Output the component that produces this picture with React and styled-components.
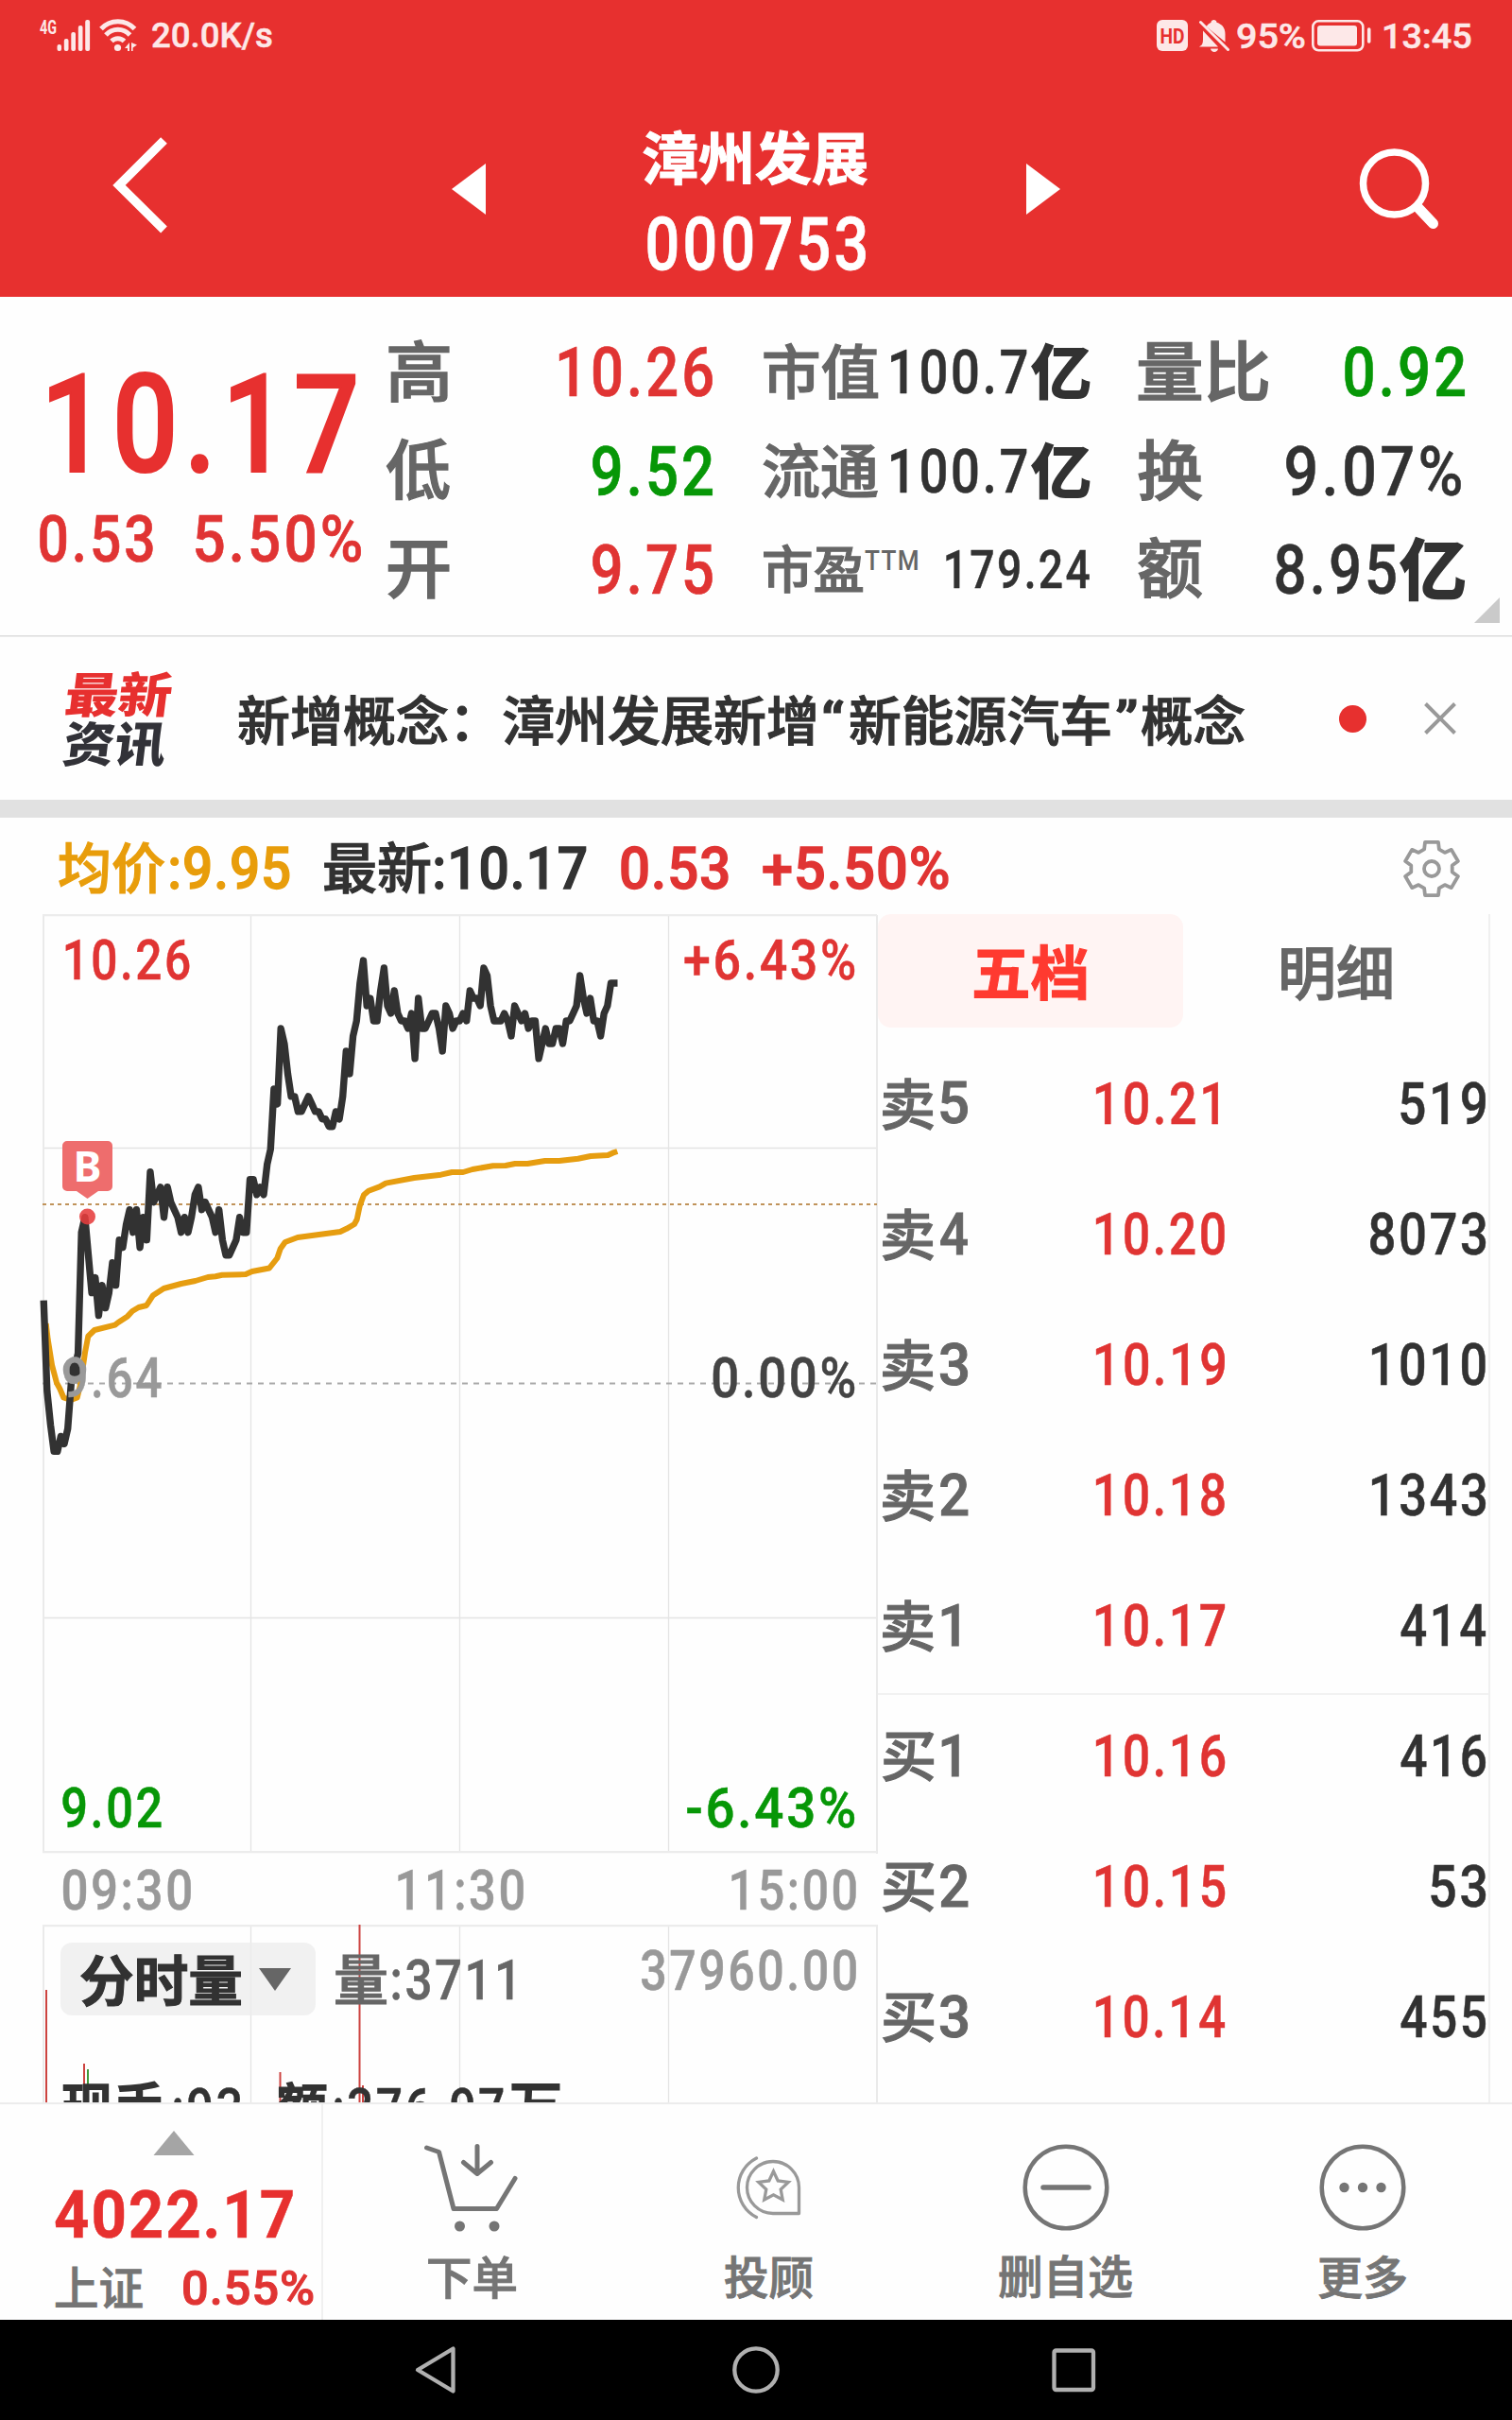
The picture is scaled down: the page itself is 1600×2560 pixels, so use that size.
import React, { useLayoutEffect, useRef, useState } from "react";
import styled, { createGlobalStyle } from "styled-components";

const FONT = '"Roboto", "Noto Sans CJK SC", sans-serif';
const RED = "#e7302f";
const UP = "#e03433";
const DOWN = "#079707";
const INK = "#323232";
const GREY = "#666666";
const LIGHT = "#999999";

const Global = createGlobalStyle`
  *, *::before, *::after { box-sizing: border-box; }
  body { margin: 0; background: #fff; font-family: ${FONT}; }
  svg { display: block; flex: none; }
`;

/* ---------- condensed text ---------- */

const TextBox = styled.span`
  display: block;
  flex: none;
  height: ${(p) => p.$h}px;
  margin-left: ${(p) => p.$ml || 0}px;
  margin-top: ${(p) => p.$mt || 0}px;
  color: ${(p) => p.$color};
`;

const TextRun = styled.span`
  display: block;
  width: max-content;
  white-space: pre;
  font-family: ${FONT};
  font-size: ${(p) => p.$size}px;
  font-weight: ${(p) => p.$weight};
  letter-spacing: ${(p) => p.$ls}px;
  line-height: ${(p) => p.$h}px;
  transform-origin: 0 50%;
  -webkit-text-stroke: ${(p) => p.$stroke}px currentColor;
`;

const OUTLINE = { 500: 0.02, 700: 0.018 };

/* Condenses a run of text so that its ink fills the width w, centred in height h. */
function Fit({ w, h, size, weight = 500, ls = 0, color = INK, ml, mt, skew = 0, stroke, children }) {
  const ref = useRef(null);
  const [fit, setFit] = useState({ width: w || 0, transform: "none" });
  useLayoutEffect(() => {
    const ctx = document.createElement("canvas").getContext("2d");
    ctx.font = `${weight} ${size}px ${FONT}`;
    ctx.letterSpacing = `${ls}px`;
    const m = ctx.measureText(ref.current.textContent);
    const left = m.actualBoundingBoxLeft;
    const ink = left + m.actualBoundingBoxRight;
    const width = w || ink;
    const dy = (m.actualBoundingBoxAscent - m.actualBoundingBoxDescent) / 2 - 0.3418 * size;
    setFit({
      width,
      transform: `translateY(${dy}px) skewX(${-skew}deg) scaleX(${width / ink}) translateX(${left}px)`,
    });
  }, [w, h, size, weight, ls, skew]);
  const outline = stroke === undefined ? size * (OUTLINE[weight] || 0) : stroke;
  return (
    <TextBox $h={h} $ml={ml} $mt={mt} $color={color} style={{ width: fit.width }}>
      <TextRun
        ref={ref}
        $size={size}
        $weight={weight}
        $ls={ls}
        $h={h}
        $stroke={outline}
        style={{ transform: fit.transform }}
      >
        {children}
      </TextRun>
    </TextBox>
  );
}

function Num({ h, size, ls, stroke = 0.5, ...rest }) {
  const fs = size || h / 0.711;
  return <Fit h={h} size={fs} ls={ls === undefined ? fs * 0.05 : ls} stroke={stroke} {...rest} />;
}

/* ---------- shell ---------- */

const Screen = styled.div`
  width: 1600px;
  height: 2560px;
  display: flex;
  flex-direction: column;
  overflow: hidden;
  background: #fefefe;
`;

const Header = styled.header`
  height: 314px;
  flex: none;
  background: ${RED};
`;

const StatusBar = styled.div`
  height: 76px;
  padding: 0 43px 0 40px;
  display: flex;
  justify-content: space-between;
  align-items: center;
`;

const StatusGroup = styled.div`
  display: flex;
  align-items: center;
  gap: ${(p) => p.$gap || 0}px;
`;

const TitleBar = styled.div`
  height: 238px;
  display: flex;
  align-items: flex-start;
  padding: 62px 0 0 118px;
`;

const IconSlot = styled.div`
  width: ${(p) => p.$w}px;
  padding-top: ${(p) => p.$pt}px;
  flex: none;
`;

const TitleText = styled.div`
  width: 405px;
  display: flex;
  flex-direction: column;
  align-items: flex-start;
  padding-top: 1px;
`;

const white90 = "#fde8e8";

function Signal() {
  return (
    <svg width="106" height="52" viewBox="40 10 106 52" fill={white90}>
      <text x="42" y="34" fontFamily="Roboto" fontWeight="700" fontSize="20" textLength="18" lengthAdjust="spacingAndGlyphs">4G</text>
      <rect x="60.500" y="45" width="4.500" height="7" rx="2" />
      <rect x="67.800" y="39" width="4.700" height="13" rx="2" />
      <rect x="75.300" y="32" width="4.700" height="20" rx="2" />
      <rect x="82.800" y="25" width="4.700" height="27" rx="2" />
      <rect x="90.200" y="19" width="4.900" height="33" rx="2" />
      <g fill="none" stroke={white90} strokeWidth="5">
        <path d="M107 28.500a24 24 0 0 1 35.500 0" />
        <path d="M112 35a17 17 0 0 1 25.500 0" />
        <path d="M118 41.500a9.500 9.500 0 0 1 13.500 0" />
      </g>
      <circle cx="124.500" cy="48.500" r="3.600" />
      <path d="M137 43v9h-2v-3h-3zM139 43v9h1.600v-3.600l4.400-2.800z" />
    </svg>
  );
}

function StatusIcons() {
  return (
    <svg width="80" height="36" viewBox="1223 19 80 36" fill={white90}>
      <rect x="1224" y="20" width="33" height="33" rx="6" />
      <text x="1227.500" y="44.500" fill={RED} fontFamily="Roboto" fontWeight="700" fontSize="22" textLength="26" lengthAdjust="spacingAndGlyphs">HD</text>
      <path d="M1269 48.500c3-1.500 4-3.500 4-8v-9L1289 48.500zM1276.500 27a11 11 0 0 1 5-4.200c0-3.800 6-3.800 6 0 6 2 9 6 9 12.500v8.200zM1281 50.500h8c-.5 4.500-7.500 4.500-8 0z" />
      <path d="M1270.500 22.500l29 29" stroke={white90} strokeWidth="3" strokeLinecap="round" />
    </svg>
  );
}

function Battery() {
  return (
    <svg width="66" height="34" viewBox="1387 20 66 34">
      <rect x="1389.300" y="21.300" width="53" height="31" rx="6" fill="none" stroke={white90} strokeWidth="2.600" />
      <rect x="1394" y="26" width="42" height="21.500" rx="3" fill={white90} />
      <path d="M1448.700 30v13" stroke={white90} strokeWidth="3.600" strokeLinecap="round" />
    </svg>
  );
}

/* ---------- quote ---------- */

const Quote = styled.section`
  height: 358px;
  flex: none;
  display: flex;
  position: relative;
  padding-top: 27px;
`;

const PriceColumn = styled.div`
  width: 410px;
  padding: 55px 0 0 53px;
`;

const ChangeRow = styled.div`
  display: flex;
  margin: 46px 0 0 -11px;
`;

const StatColumn = styled.div`
  width: ${(p) => p.$w}px;
  margin-right: ${(p) => p.$mr}px;
  display: flex;
  flex-direction: column;
`;

const StatRow = styled.div`
  height: 104.5px;
  display: flex;
  align-items: center;
  justify-content: space-between;
  padding-right: ${(p) => p.$pr || 0}px;
`;

const Pair = styled.div`
  display: flex;
  align-items: ${(p) => p.$align || "center"};
`;

const Corner = styled.svg`
  position: absolute;
  right: 13px;
  bottom: 13px;
`;

const Rule = styled.div`
  height: 2px;
  flex: none;
  background: linear-gradient(#dddddd 50%, #ececec 50%);
`;

/* ---------- news ---------- */

const News = styled.section`
  height: 172px;
  flex: none;
  display: flex;
  align-items: center;
  padding-left: 66px;
`;

const NewsBadge = styled.div`
  width: 186px;
  display: flex;
  flex-direction: column;
  gap: 5px;
`;

const Headline = styled.div`
  display: flex;
  align-items: flex-start;
  width: 1066px;
  padding-top: 4px;
`;

const Dot = styled.span`
  width: 29px;
  height: 29px;
  border-radius: 50%;
  background: ${RED};
  margin: 0 61px 0 99px;
`;

const Band = styled.div`
  height: 19px;
  flex: none;
  background: #e1e1e1;
`;

const Summary = styled.section`
  height: 102px;
  flex: none;
  display: flex;
  align-items: center;
  padding: 4px 54px 0 62px;
`;

const Spacer = styled.span`
  flex: 1;
`;

/* ---------- chart ---------- */

const Board = styled.section`
  height: 1257px;
  flex: none;
  display: flex;
  overflow: hidden;
`;

const ChartColumn = styled.div`
  width: 929px;
  padding-left: 40px;
`;

const Stack = styled.div`
  width: 890px;
  height: ${(p) => p.$h}px;
  display: grid;
  & > * { grid-area: 1 / 1; }
`;

const Labels = styled.div`
  display: flex;
  flex-direction: column;
  padding: ${(p) => p.$pad};
`;

const LabelRow = styled.div`
  display: flex;
  flex: none;
  justify-content: space-between;
  align-items: flex-start;
  margin-top: ${(p) => p.$mt || 0}px;
`;

const Axis = styled.div`
  height: 76px;
  display: flex;
  align-items: center;
  padding: 1px 0 0 27px;
`;

const Pill = styled.div`
  width: 270px;
  height: 77px;
  border-radius: 12px;
  background: rgba(236, 236, 236, 0.72);
  display: flex;
  align-items: center;
  padding-left: 21px;
  gap: 18px;
`;

const TICKS = [
  11, -1, -5.5, -9, -9, -7, -8, -6, 0, 2, 4, 20, 22, 17, 12, 14, 9, 13, 10, 12, 16, 13, 19, 18, 21, 23, 20, 23, 18, 22,
  19, 28, 24, 25, 26, 22, 26, 24, 23, 22, 20, 22, 20, 22, 25, 26, 23, 24, 23, 22, 20, 23, 19, 17, 17, 18, 19, 22, 20,
  20, 27, 27, 25, 26, 25, 29, 31, 39, 37, 47, 45, 41, 38, 38, 36, 36, 37, 38, 37, 36, 36, 35, 35, 34, 34, 36, 35, 38,
  44, 41, 46, 48, 53, 56, 50, 51, 48, 48, 52, 55, 50, 49, 52, 49, 48, 48, 47, 49, 43, 51, 47, 47, 48, 49, 49, 47, 44,
  50, 49, 47, 48, 48, 49, 48, 52, 51, 51, 50, 55, 54, 50, 48, 48, 48, 49, 48, 46, 50, 49, 48, 49, 47, 48, 48, 43, 45,
  47, 45, 45, 47, 47, 45, 48, 48, 49, 50, 54, 51, 49, 51, 48, 48, 46, 49, 50, 53, 53,
];

const PRICE_POINTS = TICKS.map((t, i) => `${(46.2 + i * 3.638).toFixed(1)},${(1463.5 - t * 7.99).toFixed(1)}`)
  .concat("653.500,1040")
  .join(" ");

const AVERAGE_POINTS =
  "48.7,1400 50.7,1417 55,1444 60,1463 63.3,1469 67.3,1478.5 75,1481 81.7,1478.5 85,1465 90,1430.7 93.3,1413.5 " +
  "100,1407 121.7,1401.6 125,1399 135,1392.4 140,1387 146.7,1383 155,1381 161.7,1370.6 173.3,1363 191.7,1358 " +
  "206.7,1355 220,1351 228,1350.3 235,1348.8 260,1348 266.7,1345 285,1341.5 293.3,1331 296.7,1321 301.7,1314 " +
  "315,1309 360,1303 366.7,1299.8 375,1295 377.7,1290 380.7,1275.7 385,1264 390,1259.7 401.7,1255.4 408.3,1251.6 " +
  "438.3,1246 466.7,1242.7 478.3,1240 490,1240 500,1237 521.7,1233.3 535,1233 545,1231 558.3,1231 576.7,1228 " +
  "591.7,1228 611.7,1225.7 625,1223 643.3,1222 648.3,1219.7 653.3,1218";

function PriceChart() {
  return (
    <svg width="890" height="994" viewBox="40 967 890 994">
      <g stroke="#e4e4e4" strokeWidth="1.300">
        <path d="M265.500 968V1960M486.500 968V1960M707.500 968V1960M45 1214.500H928M45 1711.500H928" />
      </g>
      <path d="M46 968V1960M928 968V1961" stroke="#eaeaea" strokeWidth="2" />
      <path d="M45 968.200H928M45 1959.200H928" stroke="#ececec" strokeWidth="2.200" />
      <path d="M45 1274H928" stroke="#c0935a" strokeWidth="2" strokeDasharray="4 4" />
      <path d="M45 1463.500H928" stroke="#a9a9a9" strokeWidth="2" strokeDasharray="6 6" />
      <polyline points={AVERAGE_POINTS} fill="none" stroke="#e69d10" strokeWidth="6" strokeLinejoin="round" />
      <polyline points={PRICE_POINTS} fill="none" stroke={INK} strokeWidth="7.400" strokeLinejoin="round" />
      <circle cx="92.500" cy="1287" r="8.500" fill="#e63c3c" fillOpacity=".88" />
      <path d="M71 1207h43a5 5 0 0 1 5 5v43a5 5 0 0 1-5 5h-10l-11.500 8-11.500-8h-10a5 5 0 0 1-5-5v-43a5 5 0 0 1 5-5z" fill="#ee6d6d" />
      <text x="92.500" y="1249.500" textAnchor="middle" fill="#fff" fontFamily="Noto Sans" fontWeight="700" fontSize="45">B</text>
    </svg>
  );
}

function BasePoint() {
  return (
    <svg width="890" height="994" viewBox="40 967 890 994">
      <circle cx="79" cy="1448.500" r="9.800" fill={INK} stroke={LIGHT} strokeWidth="5" />
    </svg>
  );
}

function VolumeChart() {
  return (
    <svg width="890" height="188" viewBox="40 2036 890 188">
      <path d="M265.500 2036V2224M486.500 2036V2224M707.500 2036V2224" stroke="#e4e4e4" strokeWidth="1.300" />
      <path d="M46 2036V2224M928 2036V2224" stroke="#eaeaea" strokeWidth="2" />
      <path d="M45 2037.200H928" stroke="#ececec" strokeWidth="2.200" />
      <path d="M49 2105V2224M89 2183V2224M296.500 2192V2224M380.500 2036V2224M384 2206V2224" stroke="#cc4340" strokeWidth="2" />
      <path d="M93 2189V2224" stroke="#3f9a3a" strokeWidth="2" />
    </svg>
  );
}

/* ---------- order book ---------- */

const Book = styled.div`
  width: 648px;
  border-right: 2px solid #f0f0f0;
`;

const Tabs = styled.div`
  display: flex;
  height: 120px;
`;

const Tab = styled.div`
  width: 323px;
  display: flex;
  align-items: center;
  justify-content: center;
  border-radius: 14px;
  padding: 4px 0 0;
  background: ${(p) => (p.$active ? "#fff4f3" : "transparent")};
`;

const Asks = styled.div`
  padding: 11px 0 3px;
  margin-bottom: -5px;
  border-bottom: 2px solid #f2f2f2;
`;

const Order = styled.div`
  height: 138px;
  display: flex;
  align-items: center;
  padding: 0 3px 0 5px;
`;

const Level = styled.div`
  width: 226px;
  display: flex;
  align-items: center;
`;

const asks = [
  ["卖", "5", "10.21", "519", 90],
  ["卖", "4", "10.20", "8073", 122],
  ["卖", "3", "10.19", "1010", 120],
  ["卖", "2", "10.18", "1343", 120],
  ["卖", "1", "10.17", "414", 90],
];
const bids = [
  ["买", "1", "10.16", "416", 90],
  ["买", "2", "10.15", "53", 58],
  ["买", "3", "10.14", "455", 90],
];

function OrderRow({ row: [side, level, price, qty, qtyWidth] }) {
  return (
    <Order>
      <Level>
        <Fit size={58} h={58} w={54} mt={2} color={GREY}>{side}</Fit>
        <Num h={44} w={level === "1" ? 18 : 29} ml={level === "1" ? 9 : 7} color={GREY} stroke={1}>{level}</Num>
      </Level>
      <Num h={43} w={price.endsWith("1") ? 129 : 136} color={UP}>{price}</Num>
      <Spacer />
      <Num h={43} w={qtyWidth}>{qty}</Num>
    </Order>
  );
}

/* ---------- bottom ---------- */

const Toolbar = styled.nav`
  height: 230px;
  flex: none;
  display: flex;
  padding-right: 1px;
  border-top: 2px solid #ececec;
`;

const IndexBox = styled.div`
  width: 342px;
  border-right: 2px solid #f0f0f0;
  padding: 28px 0 0 58px;
`;

const IndexRow = styled.div`
  display: flex;
  align-items: center;
  margin-top: 30px;
`;

const Tool = styled.div`
  flex: 1;
  display: flex;
  flex-direction: column;
  align-items: center;
  padding-top: 38px;
  gap: 21px;
`;

const NavBar = styled.div`
  height: 106px;
  flex: none;
  background: #000;
  display: flex;
  align-items: center;
  justify-content: center;
`;

const G = "#757575";

function CartIcon() {
  return (
    <svg width="102" height="100" viewBox="449 2264 102 100" fill="none" stroke={G} strokeWidth="5" strokeLinecap="round" strokeLinejoin="round">
      <path d="M452.500 2272l13 4.500L481 2336.500h45.500L546 2304.500" />
      <path d="M506 2270.500V2299M491.500 2287.500L506 2299.500L520.500 2287.500" />
      <circle cx="487.500" cy="2355" r="5.500" fill={G} stroke="none" />
      <circle cx="524" cy="2355" r="5.500" fill={G} stroke="none" />
    </svg>
  );
}

function AdvisorIcon() {
  return (
    <svg width="100" height="100" viewBox="763 2264 100 100" fill="none" stroke="#999" strokeWidth="3.300">
      <path d="M818 2286.500a27.500 27.500 0 1 0 0 55h27.500v-27.500a27.500 27.500 0 0 0-27.500-27.500z" strokeLinejoin="round" />
      <path d="M800.500 2283a35 35 0 0 0 0 62.500" strokeLinecap="round" />
      <path d="M818.500 2297l4.700 10 11 1.400-8 7.600 2 11-9.700-5.200-9.700 5.200 2-11-8-7.600 11-1.400z" />
    </svg>
  );
}

function CircleIcon({ children }) {
  return (
    <svg width="100" height="100" viewBox="-50 -50 100 100" fill="none" stroke={G} strokeWidth="4.500">
      <circle r="43.300" />
      {children}
    </svg>
  );
}

function gearPath() {
  const pts = [];
  for (let i = 0; i < 6; i++) {
    [[-21, 22], [-14, 29], [14, 29], [21, 22]].forEach(([a, r]) => {
      const rad = ((i * 60 - 90 + a) * Math.PI) / 180;
      pts.push(`${(r * Math.cos(rad)).toFixed(2)} ${(r * Math.sin(rad)).toFixed(2)}`);
    });
  }
  return `M${pts.join("L")}Z`;
}

const TOOLS = [
  { label: "下单", w: 93, icon: <CartIcon /> },
  { label: "投顾", w: 93, icon: <AdvisorIcon /> },
  { label: "删自选", w: 141, icon: <CircleIcon><path d="M-24 0H24" strokeWidth="5.500" strokeLinecap="round" /></CircleIcon> },
  {
    label: "更多",
    w: 92,
    icon: (
      <CircleIcon>
        <g fill={G} stroke="none"><circle cx="-19.500" r="5.200" /><circle r="5.200" /><circle cx="19.500" r="5.200" /></g>
      </CircleIcon>
    ),
  },
];

export default function App() {
  return (
    <Screen>
      <Global />
      <Header>
        <StatusBar>
          <StatusGroup $gap={15}>
            <Signal />
            <Num h={26} w={127} ls={0} mt={1} color={white90}>20.0K/s</Num>
          </StatusGroup>
          <StatusGroup $gap={6}>
            <StatusIcons />
            <Num h={26} w={72} ls={0} color={white90}>95%</Num>
            <Battery />
            <Num h={26} w={92} ls={0} ml={6} color={white90}>13:45</Num>
          </StatusGroup>
        </StatusBar>
        <TitleBar>
          <IconSlot $w={360} $pt={5}>
            <svg width="62" height="106" viewBox="118 144 62 106">
              <path d="M173.500 149.500L126 197L173.500 244" fill="none" stroke="#fff" strokeWidth="9.500" />
            </svg>
          </IconSlot>
          <IconSlot $w={203} $pt={35}>
            <svg width="36" height="54" viewBox="0 0 36 54"><path d="M0 27L36 0V54z" fill="#fff" /></svg>
          </IconSlot>
          <TitleText>
            <Fit size={60} h={58} w={237} weight={700} color="#fff">漳州发展</Fit>
            <Num h={55} w={231} color="#fff" ml={4} mt={33} stroke={0.8}>000753</Num>
          </TitleText>
          <IconSlot $w={350} $pt={35}>
            <svg width="36" height="54" viewBox="0 0 36 54"><path d="M36 27L0 0V54z" fill="#fff" /></svg>
          </IconSlot>
          <IconSlot $w={90} $pt={14}>
            <svg width="90" height="94" viewBox="1436 152 90 94" fill="none" stroke="#fff">
              <circle cx="1475.500" cy="194" r="33" strokeWidth="7.500" />
              <path d="M1500 219L1516.500 236.500" strokeWidth="11" strokeLinecap="round" />
            </svg>
          </IconSlot>
        </TitleBar>
      </Header>

      <Quote>
        <PriceColumn>
          <Num h={103} w={323} color={RED} stroke={2}>10.17</Num>
          <ChangeRow>
            <Num h={49} w={120} color={UP} stroke={0.7}>0.53</Num>
            <Num h={49} w={175} color={UP} ml={45} stroke={0.7}>5.50%</Num>
          </ChangeRow>
        </PriceColumn>
        <StatColumn $w={344} $mr={54}>
          <StatRow><Fit size={69} h={70} w={64} ml={1} color={GREY}>高</Fit><Num h={52} w={162} color={UP} stroke={0.7}>10.26</Num></StatRow>
          <StatRow><Fit size={69} h={70} w={67} ml={-1} color={GREY}>低</Fit><Num h={52} w={127} color={DOWN} stroke={0.7}>9.52</Num></StatRow>
          <StatRow><Fit size={69} h={70} w={64} ml={1} mt={3} color={GREY}>开</Fit><Num h={52} w={127} color={UP} stroke={0.7}>9.75</Num></StatRow>
        </StatColumn>
        <StatColumn $w={345} $mr={52}>
          {["市值", "流通"].map((label) => (
            <StatRow key={label}>
              <Fit size={62} h={62} w={121} color={GREY}>{label}</Fit>
              <Pair>
                <Num h={46} w={144}>100.7</Num>
                <Fit size={62} h={62} w={61} ml={5} weight={700} stroke={1.8}>亿</Fit>
              </Pair>
            </StatRow>
          ))}
          <StatRow>
            <Pair $align="flex-start">
              <Fit size={54} h={54} w={105} color={GREY}>市盈</Fit>
              <Num h={21} w={56} ml={2} mt={8} stroke={0} color={GREY}>TTM</Num>
            </Pair>
            <Num h={40} w={152}>179.24</Num>
          </StatRow>
        </StatColumn>
        <StatColumn $w={345} $mr={0}>
          <StatRow><Fit size={69} h={70} w={137} color={GREY}>量比</Fit><Num h={52} w={127} color={DOWN} stroke={0.7}>0.92</Num></StatRow>
          <StatRow $pr={4}><Fit size={69} h={70} w={67} color={GREY}>换</Fit><Num h={52} w={185}>9.07%</Num></StatRow>
          <StatRow>
            <Fit size={69} h={70} w={67} color={GREY}>额</Fit>
            <Pair>
              <Num h={52} w={127}>8.95</Num>
              <Fit size={70} h={70} w={68} ml={5} weight={700} stroke={2}>亿</Fit>
            </Pair>
          </StatRow>
        </StatColumn>
        <Corner width="27" height="27" viewBox="0 0 27 27"><path d="M27 0V27H0z" fill="#cacaca" /></Corner>
      </Quote>
      <Rule />

      <News>
        <NewsBadge>
          <Fit size={51} h={49} w={110} weight={900} color={RED} skew={7} ml={5}>最新</Fit>
          <Fit size={51} h={49} w={108} weight={900} color="#323238" skew={7} ml={2}>资讯</Fit>
        </NewsBadge>
        <Headline>
          <Fit size={56} h={56} w={611}>新增概念：漳州发展新增</Fit>
          <Fit size={56} h={20} w={22} ml={8} mt={3}>“</Fit>
          <Fit size={56} h={56} w={276} ml={6}>新能源汽车</Fit>
          <Fit size={56} h={20} w={21} ml={6} mt={3}>”</Fit>
          <Fit size={56} h={56} w={109} ml={6}>概念</Fit>
        </Headline>
        <Dot />
        <svg width="34" height="34" viewBox="0 0 34 34">
          <path d="M1.500 1.500L32.500 32.500M32.500 1.500L1.500 32.500" stroke="#999" strokeWidth="4" />
        </svg>
      </News>
      <Band />

      <Summary>
        <Fit size={58} h={58} w={112} color="#e89d0b">均价</Fit>
        <Num h={43} w={126} ml={6} ls={1} stroke={1.3} color="#e89d0b">:9.95</Num>
        <Fit size={58} h={58} w={112} ml={37}>最新</Fit>
        <Num h={43} w={160} ml={5} ls={1} stroke={1.3}>:10.17</Num>
        <Num h={43} w={112} color={UP} ml={38} ls={1} stroke={1.4}>0.53</Num>
        <Num h={43} w={196} color={UP} ml={37} ls={1} stroke={1.4}>+5.50%</Num>
        <Spacer />
        <svg width="62" height="64" viewBox="-31 -33 62 64" fill="none" stroke="#999" strokeWidth="3.800" strokeLinejoin="round">
          <path d={gearPath()} />
          <circle r="8" />
        </svg>
      </Summary>

      <Board>
        <ChartColumn>
          <Stack $h={993}>
            <PriceChart />
            <Labels $pad="27px 26px 0 26px">
              <LabelRow>
                <Num h={42} w={132} color={UP} ml={3}>10.26</Num>
                <Num h={42} w={180} color={UP}>+6.43%</Num>
              </LabelRow>
              <LabelRow $mt={400}>
                <Num h={42} w={104} ml={1} color={LIGHT}>9.64</Num>
                <Num h={42} w={149} color="#444">0.00%</Num>
              </LabelRow>
              <LabelRow $mt={413}>
                <Num h={42} w={105} color={DOWN}>9.02</Num>
                <Num h={42} w={177} color={DOWN}>-6.43%</Num>
              </LabelRow>
            </Labels>
            <BasePoint />
          </Stack>
          <Axis>
            <Num h={42} w={135} color={LIGHT}>09:30</Num>
            <Num h={42} w={133} color={LIGHT} ml={219}>11:30</Num>
            <Num h={42} w={132} color={LIGHT} ml={220}>15:00</Num>
          </Axis>
          <Stack $h={188}>
            <VolumeChart />
            <Labels $pad="19px 24px 0 24px">
              <LabelRow>
                <Pair>
                  <Pill>
                    <Fit size={58} h={58} w={170} mt={2} weight={700}>分时量</Fit>
                    <svg width="36" height="26" viewBox="0 0 36 26"><path d="M1 1H35L18 25z" fill={GREY} /></svg>
                  </Pill>
                  <Fit size={58} h={58} w={54} ml={21} color={GREY}>量</Fit>
                  <Num h={42} w={128} ml={6} color={GREY}>:3711</Num>
                </Pair>
                <Num h={42} w={227} mt={8} color={LIGHT}>37960.00</Num>
              </LabelRow>
              <LabelRow $mt={69}>
                <Pair>
                  <Fit size={58} h={58} w={107} ml={2} stroke={2}>现手</Fit>
                  <Num h={42} w={71} ml={11}>:93</Num>
                  <Fit size={58} h={58} w={52} ml={39} stroke={2}>额</Fit>
                  <Num h={42} w={179} ml={8}>:376.97</Num>
                  <Fit size={58} h={58} w={52} ml={7} stroke={2}>万</Fit>
                </Pair>
              </LabelRow>
            </Labels>
          </Stack>
        </ChartColumn>
        <Book>
          <Tabs>
            <Tab $active><Fit size={62} h={62} w={119} weight={700} color="#ff3a30">五档</Fit></Tab>
            <Tab><Fit size={62} h={62} w={116} color={GREY}>明细</Fit></Tab>
          </Tabs>
          <Asks>
            {asks.map((row) => <OrderRow key={row[2]} row={row} />)}
          </Asks>
          {bids.map((row) => <OrderRow key={row[2]} row={row} />)}
        </Book>
      </Board>

      <Toolbar>
        <IndexBox>
          <svg width="252" height="26" viewBox="0 0 252 26"><path d="M126 0L147.500 26H104.500z" fill="#a5a5a5" /></svg>
          <Num h={50} w={252} mt={37} weight={700} ls={2} color={RED}>4022.17</Num>
          <IndexRow>
            <Fit size={48} h={46} w={92} ml={1} color={G}>上证</Fit>
            <Num h={36} w={138} ml={43} ls={1} stroke={1} color={UP}>0.55%</Num>
          </IndexRow>
        </IndexBox>
        {TOOLS.map((t) => (
          <Tool key={t.label}>
            {t.icon}
            <Fit size={48} h={48} w={t.w} color={G}>{t.label}</Fit>
          </Tool>
        ))}
      </Toolbar>

      <NavBar>
        <svg width="800" height="60" viewBox="400 2477 800 60" fill="none" stroke="#b0b0b0" strokeWidth="4.300" strokeLinejoin="round">
          <path d="M479.500 2484.500V2529.500L442 2507z" />
          <circle cx="800" cy="2507" r="22.700" />
          <rect x="1115.500" y="2486.500" width="41.500" height="41.500" rx="2" />
        </svg>
      </NavBar>
    </Screen>
  );
}
